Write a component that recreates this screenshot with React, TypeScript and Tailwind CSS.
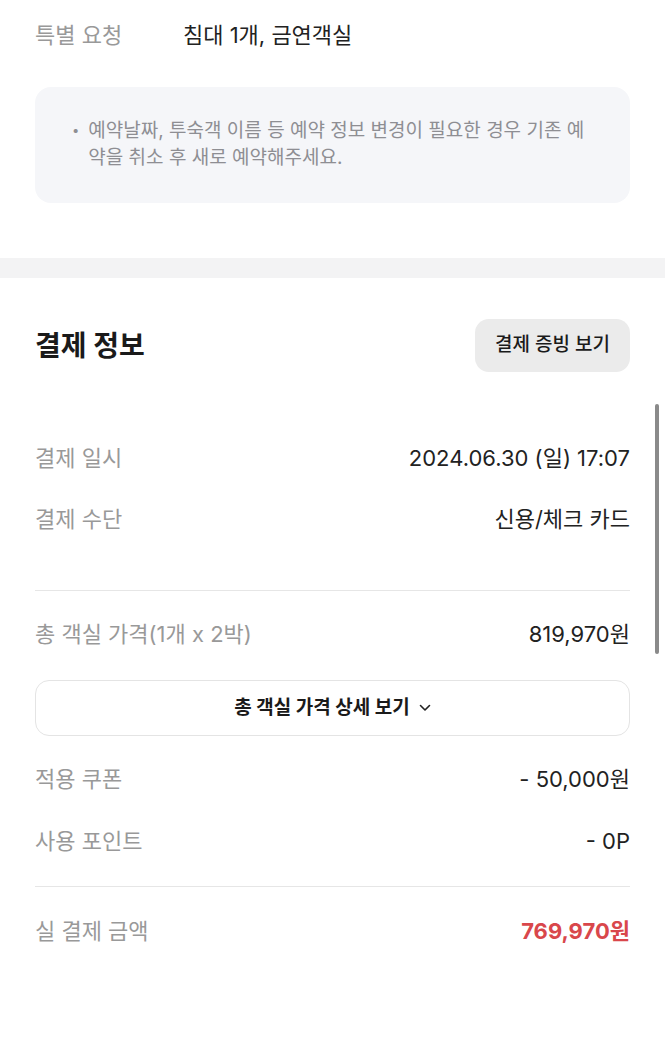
import React from "react";

const font = { fontFamily: 'Inter, "Noto Sans CJK KR", "Noto Sans", sans-serif' };

function Row({
  label,
  value,
  className = "",
  valueClass = "text-[#222]",
}: {
  label: string;
  value: string;
  className?: string;
  valueClass?: string;
}) {
  return (
    <div className={`flex items-center justify-between ${className}`}>
      <span className="text-[22px] leading-[30px] text-[#999]">{label}</span>
      <span className={`text-[22px] leading-[30px] ${valueClass}`}>{value}</span>
    </div>
  );
}

export default function App() {
  return (
    <div className="relative h-[1049px] w-[665px] overflow-hidden bg-white" style={font}>
      {/* booking info tail */}
      <section className="px-[35px] pt-[20px]">
        <div className="flex items-center">
          <span className="w-[148px] text-[22px] leading-[30px] text-[#999]">특별 요청</span>
          <span className="text-[22px] leading-[30px] text-[#222]">침대 1개, 금연객실</span>
        </div>
        <div className="mt-[37px] rounded-[16px] bg-[#f5f6f9] pb-[32px] pl-[37px] pr-[40px] pt-[30px]">
          <div className="flex gap-[9px] text-[19px] leading-[27px] text-[#8e8e93]">
            <span className="text-[13px]">•</span>
            <p className="break-all">
              예약날짜, 투숙객 이름 등 예약 정보 변경이 필요한 경우 기존 예약을 취소 후 새로
              예약해주세요.
            </p>
          </div>
        </div>
      </section>

      <div className="mt-[55px] h-[20px] bg-[#f3f3f4]" />

      {/* payment info */}
      <section className="px-[35px] pt-[41px]">
        <div className="flex items-center justify-between">
          <h2 className="text-[28px] font-bold leading-[40px] text-[#1a1a1a]">결제 정보</h2>
          <button className="h-[53px] w-[155px] rounded-[14px] bg-[#ebebeb] text-[19px] font-medium text-[#1a1a1a]">
            결제 증빙 보기
          </button>
        </div>

        <Row label="결제 일시" value="2024.06.30 (일) 17:07" className="mt-[71px]" />
        <Row label="결제 수단" value="신용/체크 카드" className="mt-[31px]" />

        <div className="mt-[56px] h-px bg-[#e6e6e6]" />

        <Row label="총 객실 가격(1개 x 2박)" value="819,970원" className="mt-[28px]" />

        <button className="mt-[31px] flex h-[56px] w-full items-center justify-center gap-[9px] rounded-[14px] border border-[#e4e4e4] text-[19px] font-bold text-[#1a1a1a]">
          총 객실 가격 상세 보기
          <svg width="12" height="8" viewBox="0 0 12 8" fill="none">
            <path d="M1.5 1.5 6 6l4.5-4.5" stroke="#222" strokeWidth="1.6" strokeLinecap="round" strokeLinejoin="round" />
          </svg>
        </button>

        <Row label="적용 쿠폰" value="- 50,000원" className="mt-[28px]" />
        <Row label="사용 포인트" value="- 0P" className="mt-[32px]" />

        <div className="mt-[30px] h-px bg-[#e6e6e6]" />

        <Row
          label="실 결제 금액"
          value="769,970원"
          className="mt-[29px]"
          valueClass="font-bold text-[#d9474b]"
        />
      </section>

      {/* scrollbar overlay */}
      <div className="absolute left-[655px] top-[404px] h-[250px] w-[4px] rounded-full bg-[#8a8a8a]" />
    </div>
  );
}
